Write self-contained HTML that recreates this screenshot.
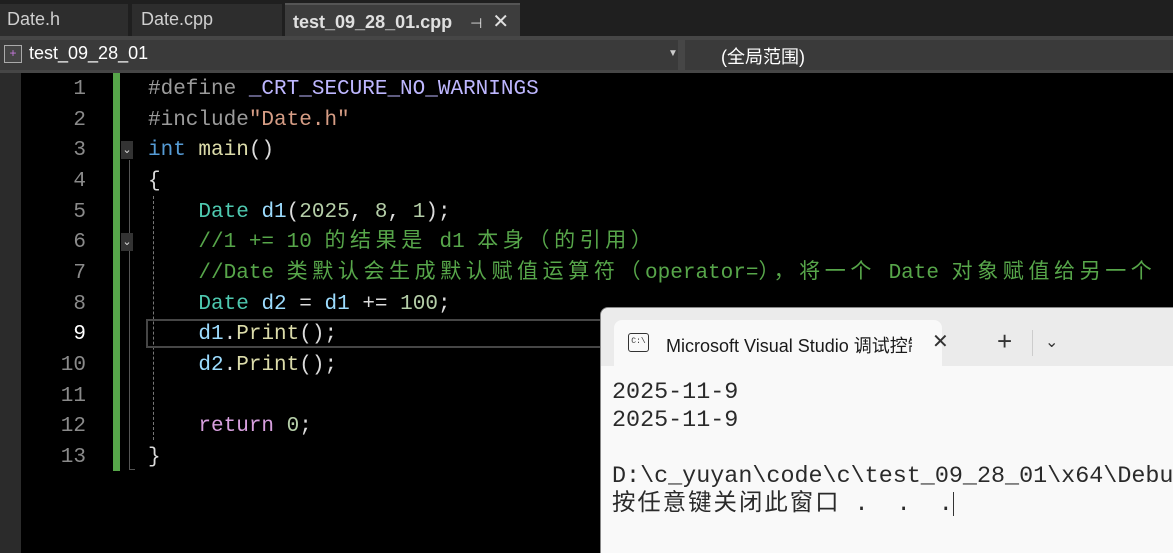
<!DOCTYPE html>
<html><head><meta charset="utf-8"><style>
*{margin:0;padding:0;box-sizing:border-box}
body{width:1173px;height:553px;overflow:hidden;background:#000;position:relative;font-family:"Liberation Sans","Noto Sans CJK SC",sans-serif}
.a{position:absolute}
.code{font-family:"Liberation Mono","Noto Sans CJK SC",monospace;font-size:21px;white-space:pre;line-height:30.67px}
.ln{color:#8a8a8a;width:86px;text-align:right;left:0}
.kw{color:#569cd6}.ty{color:#4ec9b0}.va{color:#9cdcfe}.fn{color:#dcdcaa}.cm{color:#57a64a}.nu{color:#b5cea8}.pp{color:#9b9b9b}.mc{color:#beb7ff}.st{color:#d69d85}.pl{color:#dcdcdc}.rt{color:#d8a0df}
.cj{letter-spacing:4.6px}
.con{font-family:"Liberation Mono","Noto Sans CJK SC",monospace;font-size:23.4px;color:#2a2a2a;white-space:pre;line-height:28px}
</style></head><body>
<div class="a" style="left:0;top:0;width:1173px;height:36px;background:#1f1f1f"></div>
<div class="a" style="left:0;top:4px;width:128px;height:32px;background:#2d2d2d;color:#cfcfcf;font-size:18px;padding:5px 0 0 7px">Date.h</div>
<div class="a" style="left:132px;top:4px;width:150px;height:32px;background:#2d2d2d;color:#cfcfcf;font-size:18px;padding:5px 0 0 9px">Date.cpp</div>
<div class="a" style="left:285px;top:3px;width:235px;height:33px;background:#3d3d3d;border-top:2px solid #555;color:#e0e0e0;font-size:18px;font-weight:bold;padding:4px 0 0 8px">test_09_28_01.cpp<span style="font-weight:normal;font-size:14px;margin-left:18px">⊣</span><span style="font-weight:normal;font-size:20px;margin-left:10px">✕</span></div>
<div class="a" style="left:0;top:36px;width:1173px;height:37px;background:#464646"></div>
<div class="a" style="left:0;top:40px;width:678px;height:30px;background:#3a3a3a"></div>
<div class="a" style="left:685px;top:40px;width:488px;height:30px;background:#3a3a3a"></div>
<div class="a" style="left:4px;top:45px;width:18px;height:18px;border:1px solid #aaa;background:#444;color:#c678dd;font-size:12px;line-height:14px;text-align:center">+</div>
<div class="a" style="left:29px;top:43px;color:#fff;font-size:18px">test_09_28_01</div>
<div class="a" style="left:668px;top:48px;color:#ccc;font-size:10px">▼</div>
<div class="a" style="left:721px;top:43px;color:#fff;font-size:18px">(全局范围)</div>
<div class="a" style="left:0;top:73px;width:21px;height:480px;background:#2b2b2b"></div>
<div class="a" style="left:113px;top:73px;width:7px;height:398px;background:#57a64a"></div>
<div class="a" style="left:129px;top:160px;width:1px;height:310px;background:#555"></div>
<div class="a" style="left:129px;top:469px;width:6px;height:1px;background:#555"></div>
<div class="a" style="left:153px;top:196px;height:244px;border-left:1px dashed #777"></div>
<div class="a" style="left:121px;top:141px;width:12px;height:18px;background:#333;color:#ddd;font-size:11px;text-align:center;line-height:18px">⌄</div>
<div class="a" style="left:121px;top:233px;width:12px;height:18px;background:#333;color:#ddd;font-size:11px;text-align:center;line-height:18px">⌄</div>
<div class="a" style="left:146px;top:319px;width:460px;height:29px;border:2px solid #464646"></div>
<div class="a code ln" style="top:75px">1
2
3
4
5
6
7
8
<span style="color:#fff">9</span>
10
11
12
13</div>
<div class="a code" style="left:148px;top:75px"><span class="pp">#define</span> <span class="mc">_CRT_SECURE_NO_WARNINGS</span>
<span class="pp">#include</span><span class="st">"Date.h"</span>
<span class="kw">int</span> <span class="fn">main</span><span class="pl">()</span>
<span class="pl">{</span>
    <span class="ty">Date</span> <span class="va">d1</span><span class="pl">(</span><span class="nu">2025</span><span class="pl">,</span> <span class="nu">8</span><span class="pl">,</span> <span class="nu">1</span><span class="pl">);</span>
    <span class="cm">//1 += 10 <span class="cj">的结果是</span> d1 <span class="cj">本身（的引用）</span></span>
    <span class="cm">//Date <span class="cj">类默认会生成默认赋值运算符（</span>operator=<span class="cj">），将一个</span> Date <span class="cj">对象赋值给另一个</span></span>
    <span class="ty">Date</span> <span class="va">d2</span> <span class="pl">=</span> <span class="va">d1</span> <span class="pl">+=</span> <span class="nu">100</span><span class="pl">;</span>
    <span class="va">d1</span><span class="pl">.</span><span class="fn">Print</span><span class="pl">();</span>
    <span class="va">d2</span><span class="pl">.</span><span class="fn">Print</span><span class="pl">();</span>

    <span class="rt">return</span> <span class="nu">0</span><span class="pl">;</span>
<span class="pl">}</span></div>
<div class="a" style="left:600px;top:307px;width:573px;height:246px;background:#f9f9f9;border-top-left-radius:8px;border:1px solid #888;border-right:none;border-bottom:none;overflow:hidden"></div>
<div class="a" style="left:601px;top:308px;width:572px;height:58px;background:#ebebeb;border-top-left-radius:8px"></div>
<div class="a" style="left:614px;top:320px;width:328px;height:47px;background:#f9f9f9;border-radius:8px 8px 0 0"></div>
<div class="a" style="left:628px;top:333px;width:21px;height:19px;border:1.5px solid #333;border-radius:3px;font-size:8px;color:#333;text-align:center;line-height:16px;font-family:'Liberation Mono',monospace">C:\</div>
<div class="a" style="left:666px;top:332px;font-size:18px;color:#1a1a1a;width:246px;overflow:hidden;white-space:nowrap">Microsoft Visual Studio 调试控制台</div>
<div class="a" style="left:932px;top:329px;font-size:20px;color:#333">✕</div>
<div class="a" style="left:997px;top:326px;font-size:26px;color:#333;font-weight:300">+</div>
<div class="a" style="left:1032px;top:330px;width:1px;height:26px;background:#ccc"></div>
<div class="a" style="left:1045px;top:332px;font-size:16px;color:#333">⌄</div>
<div class="a con" style="left:612px;top:379px;width:561px;overflow:hidden">2025-11-9
2025-11-9

D:\c_yuyan\code\c\test_09_28_01\x64\Debug\test_09_28_01.exe
<span style="letter-spacing:2px">按任意键关闭此窗口</span> .  .  .<span style="display:inline-block;width:1px;height:24px;background:#333;vertical-align:middle"></span></div>
</body></html>
